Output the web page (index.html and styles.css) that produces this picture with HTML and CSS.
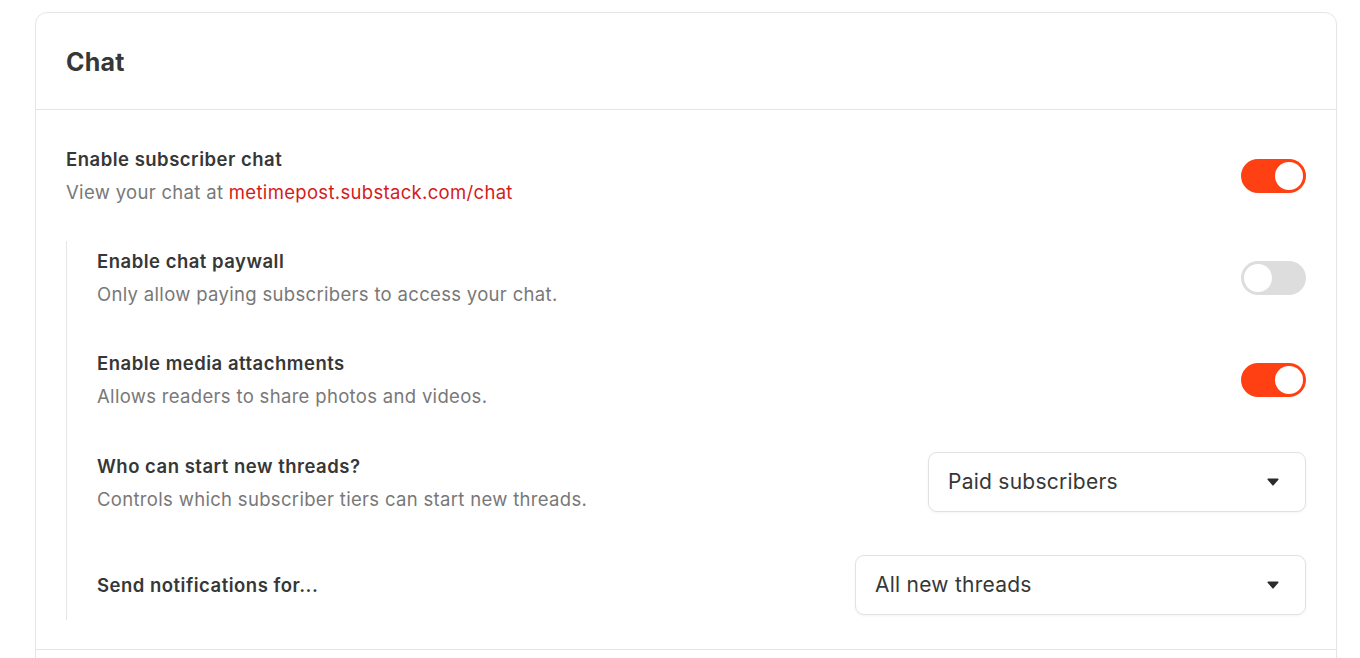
FILE: index.html
```html
<!DOCTYPE html>
<html lang="en">
<head>
<meta charset="utf-8">
<title>Chat settings</title>
<link rel="stylesheet" href="styles.css">
</head>
<body>
<main class="page">
  <section class="card">
    <header class="card-header">
      <h2 class="card-title">Chat</h2>
    </header>
    <div class="card-body">
      <div class="setting">
        <div class="setting-text">
          <div class="setting-label">Enable subscriber chat</div>
          <div class="setting-desc">View your chat at <a class="link" href="#">metimepost.substack.com/chat</a></div>
        </div>
        <button class="toggle toggle-on" type="button" aria-pressed="true"><span class="knob"></span></button>
      </div>

      <div class="sub-settings">
        <div class="setting">
          <div class="setting-text">
            <div class="setting-label">Enable chat paywall</div>
            <div class="setting-desc">Only allow paying subscribers to access your chat.</div>
          </div>
          <button class="toggle" type="button" aria-pressed="false"><span class="knob"></span></button>
        </div>

        <div class="setting">
          <div class="setting-text">
            <div class="setting-label">Enable media attachments</div>
            <div class="setting-desc">Allows readers to share photos and videos.</div>
          </div>
          <button class="toggle toggle-on" type="button" aria-pressed="true"><span class="knob"></span></button>
        </div>

        <div class="setting">
          <div class="setting-text">
            <div class="setting-label">Who can start new threads?</div>
            <div class="setting-desc">Controls which subscriber tiers can start new threads.</div>
          </div>
          <div class="select select-tiers">
            <span class="select-value">Paid subscribers</span>
            <svg class="caret" width="12" height="8" viewBox="0 0 12 8"><path d="M1.2 0.5h9.6a0.8 0.8 0 0 1 0.6 1.3L6.6 7.3a0.8 0.8 0 0 1-1.2 0L0.6 1.8A0.8 0.8 0 0 1 1.2 0.5z" fill="#2b2b2b"/></svg>
          </div>
        </div>

        <div class="setting">
          <div class="setting-text">
            <div class="setting-label">Send notifications for...</div>
          </div>
          <div class="select select-notify">
            <span class="select-value">All new threads</span>
            <svg class="caret" width="12" height="8" viewBox="0 0 12 8"><path d="M1.2 0.5h9.6a0.8 0.8 0 0 1 0.6 1.3L6.6 7.3a0.8 0.8 0 0 1-1.2 0L0.6 1.8A0.8 0.8 0 0 1 1.2 0.5z" fill="#2b2b2b"/></svg>
          </div>
        </div>
      </div>
    </div>
    <div class="card-next"></div>
  </section>
</main>
</body>
</html>
```

FILE: styles.css
```css
* {
  box-sizing: border-box;
}

html, body {
  margin: 0;
  background: #ffffff;
}

body {
  font-family: Inter, "Noto Sans", "Liberation Sans", sans-serif;
  color: #363737;
  -webkit-font-smoothing: antialiased;
}

.page {
  padding: 12px 23px 0 35px;
}

.card {
  border: 1px solid #e5e5e5;
  border-radius: 12px;
  background: #fff;
}

.card-header {
  height: 97px;
  display: flex;
  align-items: center;
  padding: 2px 30px 0;
  border-bottom: 1px solid #e5e5e5;
}

.card-title {
  margin: 0;
  font-size: 25px;
  font-weight: 700;
  letter-spacing: 0.2px;
  line-height: 32px;
  color: #363737;
}

.card-body {
  padding: 36px 30px 29px 30px;
  border-bottom: 1px solid #e5e5e5;
}

.card-next {
  height: 40px;
}

.setting {
  display: flex;
  align-items: center;
  justify-content: space-between;
  gap: 24px;
}

.setting-text {
  display: flex;
  flex-direction: column;
  gap: 7px;
}

.setting-label {
  font-size: 18.5px;
  line-height: 26px;
  font-weight: 600;
  letter-spacing: 0.5px;
  color: #363737;
}

.setting-desc {
  font-size: 18.5px;
  line-height: 26px;
  letter-spacing: 0.32px;
  color: #787878;
}

.link {
  color: #d41c1c;
  text-decoration: none;
}

.sub-settings {
  margin-top: 36px;
  padding: 7px 0 5px 30px;
  border-left: 1px solid #e5e5e5;
  display: flex;
  flex-direction: column;
  gap: 43px;
}

.toggle {
  flex: none;
  width: 65px;
  height: 34px;
  padding: 3px;
  border: none;
  border-radius: 17px;
  background: #dddddd;
  display: flex;
  align-items: center;
  justify-content: flex-start;
  cursor: pointer;
}

.toggle-on {
  background: #ff4012;
  justify-content: flex-end;
}

.knob {
  width: 28px;
  height: 28px;
  border-radius: 50%;
  background: #ffffff;
}

.select {
  flex: none;
  height: 60px;
  display: flex;
  align-items: center;
  justify-content: space-between;
  padding: 0 26px 0 19px;
  border: 1px solid #e2e2e2;
  border-radius: 9px;
  box-shadow: 0 1px 3px rgba(0, 0, 0, 0.05);
  background: #fff;
}

.select-tiers {
  width: 378px;
}

.select-notify {
  width: 451px;
}

.select-value {
  font-size: 21px;
  line-height: 28px;
  letter-spacing: 0.25px;
  color: #363737;
}

.caret {
  display: block;
}
```
